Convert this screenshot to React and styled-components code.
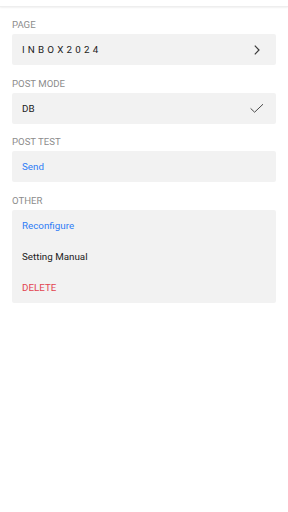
import React from 'react';
import styled, { createGlobalStyle } from 'styled-components';

const Global = createGlobalStyle`
  html, body {
    margin: 0;
    padding: 0;
    background: #ffffff;
    font-family: Roboto, "Liberation Sans", sans-serif;
  }
`;

const Page = styled.div`
  width: 288px;
  height: 512px;
  background: #fff;
`;

const Header = styled.div`
  height: 5.5px;
  background: #fff;
  box-shadow: 0 1px 2px rgba(0, 0, 0, 0.06);
  border-bottom: 1px solid #eeeeee;
`;

const Content = styled.div`
  padding: 0 12px;
`;

const Section = styled.section`
  padding-top: 12.5px;
`;

const Label = styled.div`
  font-size: 9.6px;
  line-height: 12px;
  color: #8c8c8c;
  margin-bottom: 3px;
`;

const Card = styled.div`
  background: #f2f2f2;
  border-radius: 2px;
`;

const Row = styled.div`
  height: 31px;
  display: flex;
  align-items: center;
  justify-content: space-between;
  padding: 0 12px 0 10px;
  font-size: 9.8px;
  color: ${props => props.color || '#222'};
  letter-spacing: ${props => props.spaced ? '3.2px' : 'normal'};
`;

const Icon = styled.svg`
  width: 14px;
  height: 14px;
  flex-shrink: 0;
`;

const Chevron = () => (
  <Icon viewBox="0 0 14 14" fill="none" stroke="#3a3a3a" strokeWidth="1.2">
    <path d="M4.8 2.6 L9 7 L4.8 11.4" />
  </Icon>
);

const Check = () => (
  <Icon viewBox="0 0 14 14" fill="none" stroke="#4a4a4a" strokeWidth="1">
    <path d="M0.6 7.4 L4.6 11.2 L13 3.2" />
  </Icon>
);

export default function App() {
  return (
    <Page>
      <Global />
      <Header />
      <Content>
        <Section>
          <Label>PAGE</Label>
          <Card>
            <Row spaced>
              <span>INBOX2024</span>
              <Chevron />
            </Row>
          </Card>
        </Section>
        <Section>
          <Label>POST MODE</Label>
          <Card>
            <Row>
              <span>DB</span>
              <Check />
            </Row>
          </Card>
        </Section>
        <Section>
          <Label>POST TEST</Label>
          <Card>
            <Row color="#2f7df6">Send</Row>
          </Card>
        </Section>
        <Section>
          <Label>OTHER</Label>
          <Card>
            <Row color="#2f7df6">Reconfigure</Row>
            <Row>Setting Manual</Row>
            <Row color="#e2434f">DELETE</Row>
          </Card>
        </Section>
      </Content>
    </Page>
  );
}
